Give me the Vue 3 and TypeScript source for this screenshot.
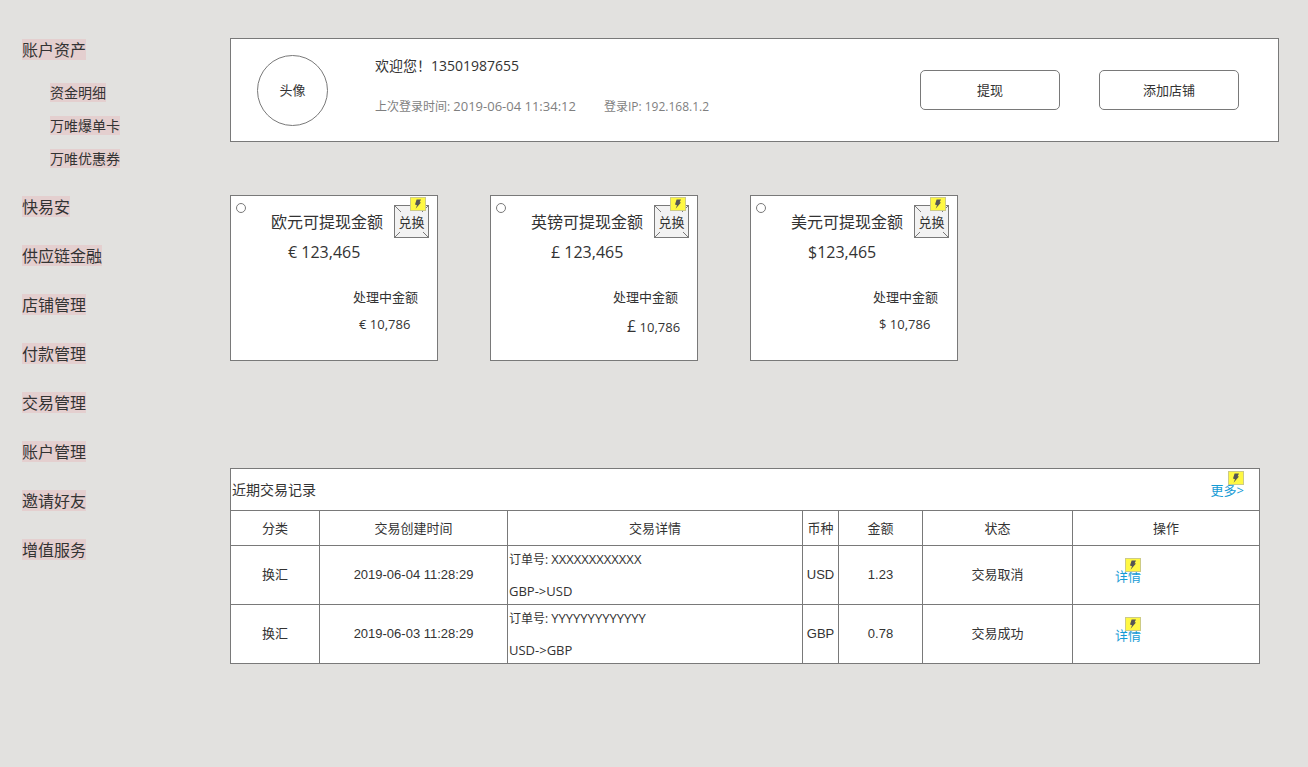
<script setup lang="ts">
import { defineComponent, h } from 'vue'

interface MenuItem {
  label: string
  children?: string[]
}

interface CurrencyCard {
  code: string
  title: string
  amount: string
  symbol: string
  pending: string
  largeSymbol?: boolean
}

interface TradeRecord {
  kind: string
  time: string
  order: string
  pair: string
  currency: string
  amount: string
  status: string
}

const menu: MenuItem[] = [
  { label: '账户资产', children: ['资金明细', '万唯爆单卡', '万唯优惠券'] },
  { label: '快易安' },
  { label: '供应链金融' },
  { label: '店铺管理' },
  { label: '付款管理' },
  { label: '交易管理' },
  { label: '账户管理' },
  { label: '邀请好友' },
  { label: '增值服务' },
]

const cards: CurrencyCard[] = [
  { code: 'EUR', title: '欧元可提现金额', amount: '€ 123,465', symbol: '€', pending: '10,786' },
  { code: 'GBP', title: '英镑可提现金额', amount: '£ 123,465', symbol: '£', pending: '10,786', largeSymbol: true },
  { code: 'USD', title: '美元可提现金额', amount: '$123,465', symbol: '$', pending: '10,786' },
]

const columns: string[] = ['分类', '交易创建时间', '交易详情', '币种', '金额', '状态', '操作']

const records: TradeRecord[] = [
  { kind: '换汇', time: '2019-06-04 11:28:29', order: 'XXXXXXXXXXXX', pair: 'GBP->USD', currency: 'USD', amount: '1.23', status: '交易取消' },
  { kind: '换汇', time: '2019-06-03 11:28:29', order: 'YYYYYYYYYYYYY', pair: 'USD->GBP', currency: 'GBP', amount: '0.78', status: '交易成功' },
]

const BoltBadge = defineComponent({
  name: 'BoltBadge',
  render: () =>
    h('svg', { class: 'bolt', viewBox: '0 0 16 14', width: 16, height: 14, 'aria-hidden': 'true' }, [
      h('rect', { x: 0.5, y: 0.5, width: 15, height: 13, fill: '#fff843', stroke: '#cdcb86' }),
      h('path', { d: 'M6.6 2.6h4.4L9.6 5.2l1.4.4L5.6 11.8 7 8.2 5 7.6z', fill: '#555' }),
    ]),
})
</script>

<template>
  <div class="page">
    <nav class="sidebar">
      <ul class="menu">
        <li v-for="item in menu" :key="item.label">
          <a href="#" class="tag">{{ item.label }}</a>
          <ul v-if="item.children" class="submenu">
            <li v-for="child in item.children" :key="child">
              <a href="#" class="tag small">{{ child }}</a>
            </li>
          </ul>
        </li>
      </ul>
    </nav>

    <main class="main">
      <header class="profile">
        <div class="avatar">头像</div>
        <div class="info">
          <p class="welcome">欢迎您！13501987655</p>
          <p class="login">
            <span>上次登录时间: <time>2019-06-04 11:34:12</time></span>
            <span>登录IP: 192.168.1.2</span>
          </p>
        </div>
        <div class="actions">
          <button type="button" class="action">提现</button>
          <button type="button" class="action">添加店铺</button>
        </div>
      </header>

      <section class="cards">
        <article v-for="card in cards" :key="card.code" class="card" :class="{ large: card.largeSymbol }">
          <input class="pick" type="radio" name="currency" :value="card.code" :aria-label="card.title" />
          <div class="head">
            <h2>{{ card.title }}</h2>
            <button type="button" class="exchange">
              <svg class="corners" viewBox="0 0 33 31" aria-hidden="true">
                <path d="M0 0l6 6M33 0l-6 6M0 31l5-5M33 31l-5-5" />
              </svg>
              <span>兑换</span>
              <BoltBadge class="badge" />
            </button>
          </div>
          <p class="amount">{{ card.amount }}</p>
          <p class="pending-label">处理中金额</p>
          <p class="pending">
            <span class="symbol">{{ card.symbol }}</span> {{ card.pending }}
          </p>
        </article>
      </section>

      <table class="records">
        <colgroup>
          <col class="c-kind" />
          <col class="c-time" />
          <col class="c-detail" />
          <col class="c-currency" />
          <col class="c-amount" />
          <col class="c-status" />
          <col class="c-action" />
        </colgroup>
        <thead>
          <tr class="title-row">
            <th colspan="7">
              <div class="title-bar">
                <span>近期交易记录</span>
                <a href="#" class="link">更多&gt;<BoltBadge class="badge" /></a>
              </div>
            </th>
          </tr>
          <tr class="head-row">
            <th v-for="column in columns" :key="column" scope="col">{{ column }}</th>
          </tr>
        </thead>
        <tbody>
          <tr v-for="record in records" :key="record.order">
            <td class="cjk">{{ record.kind }}</td>
            <td class="latin">{{ record.time }}</td>
            <td class="detail">
              <p><span class="order-label">订单号: </span>{{ record.order }}</p>
              <p>{{ record.pair }}</p>
            </td>
            <td class="latin">{{ record.currency }}</td>
            <td class="latin">{{ record.amount }}</td>
            <td class="cjk">{{ record.status }}</td>
            <td class="operate">
              <a href="#" class="link">详情<BoltBadge class="badge" /></a>
            </td>
          </tr>
        </tbody>
      </table>
    </main>
  </div>
</template>

<style>
body {
  margin: 0;
  background: #e2e1df;
}
</style>

<style scoped>
.page {
  display: flex;
  min-height: 100vh;
  box-sizing: border-box;
  padding: 38px 29px 38px 22px;
  background: #e2e1df;
  color: #333;
  font-family: "Open Sans", "Noto Sans CJK SC", sans-serif;
  font-size: 13px;
  line-height: 20px;
}

p,
h2,
ul {
  margin: 0;
  padding: 0;
  font-weight: 400;
  list-style: none;
}

a {
  color: inherit;
  text-decoration: none;
}

button {
  padding: 0;
  color: inherit;
  font: inherit;
  cursor: pointer;
}

.sidebar {
  flex: 0 0 208px;
  padding-top: 1px;
}

.menu {
  display: flex;
  flex-direction: column;
  gap: 28px;
}

.tag {
  display: block;
  width: fit-content;
  padding-top: 1px;
  background: #e4cfcf;
  font-size: 16px;
  line-height: 20px;
}

.submenu {
  display: flex;
  flex-direction: column;
  gap: 14px;
  margin: 23px 0 0 28px;
}

.tag.small {
  font-size: 14px;
  line-height: 18px;
}

.main {
  flex: 1;
  min-width: 0;
}

.profile {
  display: flex;
  align-items: center;
  box-sizing: border-box;
  min-height: 104px;
  padding: 0 39px 0 26px;
  border: 1px solid #797979;
  background: #fff;
}

.avatar {
  display: flex;
  align-items: center;
  justify-content: center;
  box-sizing: border-box;
  width: 71px;
  height: 71px;
  border: 1px solid #797979;
  border-radius: 50%;
}

.info {
  display: flex;
  flex-direction: column;
  gap: 20px;
  margin: 0 auto 8px 47px;
}

.welcome {
  font-size: 14px;
}

.login {
  display: flex;
  align-items: baseline;
  gap: 28px;
  color: #7f7f7f;
  font-size: 12px;
}

.login time {
  font-size: 13px;
}

.actions {
  display: flex;
  gap: 39px;
}

.action {
  box-sizing: border-box;
  width: 140px;
  height: 40px;
  border: 1px solid #797979;
  border-radius: 5px;
  background: #fff;
}

.cards {
  display: grid;
  grid-template-columns: repeat(3, 208px);
  gap: 52px;
  margin-top: 53px;
}

.card {
  position: relative;
  box-sizing: border-box;
  height: 166px;
  padding-top: 9px;
  border: 1px solid #797979;
  background: #fff;
}

.pick {
  position: absolute;
  top: 7px;
  left: 5px;
  width: 10px;
  height: 10px;
  margin: 0;
  border: 1px solid #797979;
  border-radius: 50%;
  background: #fff;
  appearance: none;
}

.head {
  display: flex;
  align-items: center;
  justify-content: space-between;
  padding: 0 8px 0 40px;
}

.head h2 {
  font-size: 16px;
}

.exchange {
  position: relative;
  box-sizing: border-box;
  width: 35px;
  height: 33px;
  border: 1px solid #797979;
  background: #f2f2f2;
}

.corners {
  position: absolute;
  inset: 0;
  fill: none;
  stroke: #797979;
}

.exchange span {
  position: relative;
}

.badge {
  position: absolute;
}

.exchange .badge {
  top: -9px;
  right: 2px;
}

.amount {
  margin-top: 4px;
  padding-left: 57px;
  font-size: 16px;
}

.pending-label {
  margin-top: 25px;
  padding-left: 122px;
}

.pending {
  margin-top: 7px;
  padding-left: 128px;
}

.large .amount {
  padding-left: 60px;
}

.large .pending {
  margin-top: 9px;
  padding-left: 136px;
}

.large .symbol {
  font-size: 16px;
}

.records {
  width: calc(100% - 19px);
  margin-top: 107px;
  border-collapse: collapse;
  table-layout: fixed;
  background: #fff;
}

.c-kind { width: 89px; }
.c-time { width: 188px; }
.c-detail { width: 295px; }
.c-currency { width: 36px; }
.c-amount { width: 84px; }
.c-status { width: 150px; }
.c-action { width: 187px; }

.records th,
.records td {
  padding: 0;
  border: 1px solid #797979;
  font-weight: 400;
  text-align: center;
}

.title-row {
  height: 42px;
}

.head-row {
  height: 35px;
}

tbody tr {
  height: 59px;
}

.title-bar {
  display: flex;
  align-items: center;
  justify-content: space-between;
  padding: 0 15px 0 1px;
  font-size: 14px;
}

.link {
  position: relative;
  color: #169bd5;
  font-size: 13px;
}

.link .badge {
  top: -9px;
  right: 0;
}

.latin {
  font-family: "Liberation Sans", sans-serif;
}

.records .cjk {
  padding-bottom: 3px;
}

.records .detail {
  padding: 0 0 1px 1px;
  text-align: left;
}

.detail p {
  line-height: 18px;
}

.detail p + p {
  margin-top: 13px;
}

.order-label {
  font-size: 12px;
}

.records .operate {
  padding: 2px 0 0 42px;
  text-align: left;
}
</style>
